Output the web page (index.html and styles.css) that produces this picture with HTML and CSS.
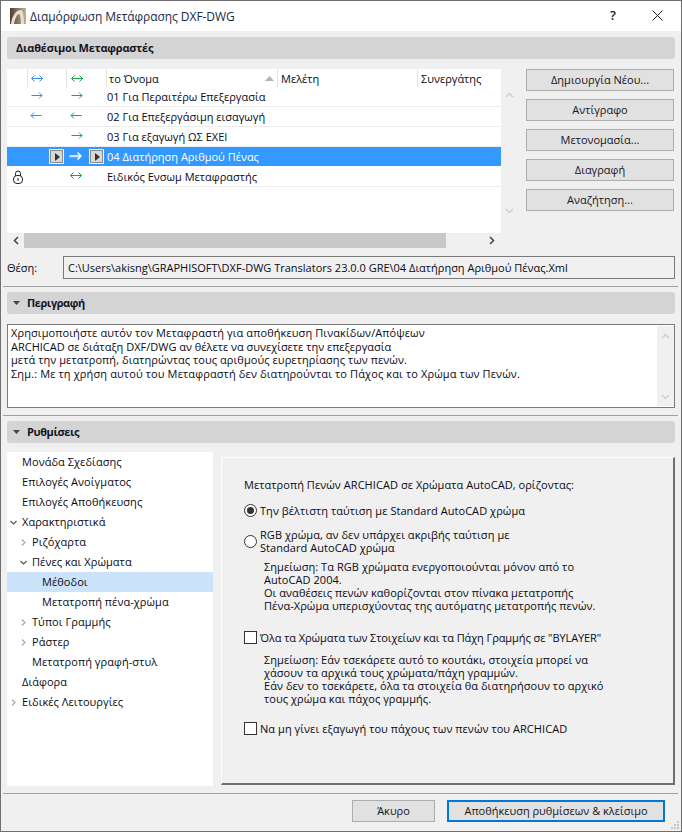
FILE: index.html
```html
<!DOCTYPE html>
<html lang="el">
<head>
<meta charset="utf-8">
<title>Διαμόρφωση Μετάφρασης DXF-DWG</title>
<link rel="stylesheet" href="styles.css">
</head>
<body>
<svg class="defs" width="0" height="0" aria-hidden="true">
  <symbol id="sel-arrow" viewBox="0 0 14 11"><path d="M.5 6.500h11M8 2.500l3.500 4L8 10" fill="none" stroke="#4fc88a"/><path d="M.5 5h11.500M8.500 1.500 12 5 8.500 8.500" fill="none" stroke="#fff" stroke-width="1.400"/></symbol>
  <symbol id="caret" viewBox="0 0 7 4"><path d="M0 0h7L3.500 4z" fill="#444"/></symbol>
  <symbol id="chev-d" viewBox="0 0 7 5"><path d="M.5 1 3.500 4 6.500 1" fill="none" stroke="#555" stroke-width="1.200"/></symbol>
  <symbol id="chev-r" viewBox="0 0 5 7"><path d="M1 .5 4 3.500 1 6.500" fill="none" stroke="#aaa" stroke-width="1.200"/></symbol>
</svg>
<div class="window">
  <header class="titlebar">
    <svg class="app-icon" viewBox="0 0 16 16"><defs><linearGradient id="ai" x1="0" x2="1"><stop offset="0" stop-color="#4a4034"/><stop offset="1" stop-color="#c0b298"/></linearGradient></defs><rect width="16" height="16" fill="url(#ai)"/><path d="M1 16C2 8 6 2 11 2c2 0 3 6 3 14h-3c0-5-1-10-2-10-2 0-4 5-5 10z" fill="#e8dfca"/></svg>
    <span class="title">Διαμόρφωση Μετάφρασης DXF-DWG</span>
    <span class="help">?</span>
    <svg class="close" viewBox="0 0 11 11"><path d="M.5.500l10 10M10.500.500l-10 10" stroke="#222" fill="none"/></svg>
  </header>
  <main class="content">
    <h2 class="section-head plain">Διαθέσιμοι Μεταφραστές</h2>
    <section class="translators">
      <div class="list-wrap">
        <div class="list">
          <div class="row head">
            <span></span>
            <span class="hc blue"><svg class="arr" viewBox="0 0 12 9"><path d="M.5 4.500h11M3.500 1.500l-3 3 3 3M8.500 1.500l3 3-3 3"/></svg></span>
            <span class="hc green"><svg class="arr" viewBox="0 0 12 9"><path d="M.5 4.500h11M3.500 1.500l-3 3 3 3M8.500 1.500l3 3-3 3"/></svg></span>
            <span class="hc name">το Όνομα<svg class="sort" viewBox="0 0 9 5"><path d="M0 5h9L4.500 0z" fill="#b4b4b4"/></svg></span>
            <span class="hc txt">Μελέτη</span>
            <span class="hc txt">Συνεργάτης</span>
          </div>
          <div class="row"><span></span><span class="c blue"><svg class="arr" viewBox="0 0 12 9"><path d="M.5 4.500h10.500M8 1.500l3 3-3 3"/></svg></span><span class="c green"><svg class="arr" viewBox="0 0 12 9"><path d="M.5 4.500h10.500M8 1.500l3 3-3 3"/></svg></span><span class="n">01 Για Περαιτέρω Επεξεργασία</span></div>
          <div class="row"><span></span><span class="c blue"><svg class="arr lft" viewBox="0 0 12 9"><path d="M1 4.500h10.500M4 1.500l-3 3 3 3"/></svg></span><span class="c green"><svg class="arr lft" viewBox="0 0 12 9"><path d="M1 4.500h10.500M4 1.500l-3 3 3 3"/></svg></span><span class="n">02 Για Επεξεργάσιμη εισαγωγή</span></div>
          <div class="row"><span></span><span class="c"></span><span class="c green"><svg class="arr" viewBox="0 0 12 9"><path d="M.5 4.500h10.500M8 1.500l3 3-3 3"/></svg></span><span class="n">03 Για εξαγωγή ΩΣ ΕΧΕΙ</span></div>
          <div class="row selected">
            <span></span>
            <span class="c end"><span class="play"></span></span>
            <span class="c sel-arrow end"><svg class="arr-sel"><use href="#sel-arrow"/></svg><span class="play"></span></span>
            <span class="n">04 Διατήρηση Αριθμού Πένας</span>
          </div>
          <div class="row">
            <span class="c lock"><svg viewBox="0 0 10 14" width="10" height="14"><path d="M2.500 6V3.500a2.500 2.500 0 0 1 5 0V6" fill="none" stroke="#222"/><rect x=".5" y="5.500" width="9" height="8" rx="3.500" fill="#fff" stroke="#222"/><path d="M5 8v3" stroke="#222"/></svg></span>
            <span class="c"></span><span class="c green"><svg class="arr lft" viewBox="0 0 12 9"><path d="M.5 4.500h11M3.500 1.500l-3 3 3 3M8.500 1.500l3 3-3 3"/></svg></span><span class="n">Ειδικός Ενσωμ Μεταφραστής</span>
          </div>
        </div>
        <div class="vscroll">
          <svg class="sv" viewBox="0 0 9 6"><path d="M1 5 4.500 1.500 8 5" fill="none" stroke="#cfcfcf" stroke-width="1.500"/></svg>
          <svg class="sv" viewBox="0 0 9 6"><path d="M1 1 4.500 4.500 8 1" fill="none" stroke="#cfcfcf" stroke-width="1.500"/></svg>
        </div>
        <div class="hscroll">
          <span class="harrow"><svg width="6" height="9" viewBox="0 0 6 9"><path d="M5 1 1.500 4.500 5 8" fill="none" stroke="#444" stroke-width="1.500"/></svg></span>
          <span class="thumb"></span>
          <span class="harrow last"><svg width="6" height="9" viewBox="0 0 6 9"><path d="M1 1 4.500 4.500 1 8" fill="none" stroke="#444" stroke-width="1.500"/></svg></span>
        </div>
      </div>
      <div class="side-buttons">
        <button class="btn">Δημιουργία Νέου...</button>
        <button class="btn">Αντίγραφο</button>
        <button class="btn">Μετονομασία...</button>
        <button class="btn">Διαγραφή</button>
        <button class="btn">Αναζήτηση...</button>
      </div>
    </section>
    <div class="path-row">
      <span class="path-label">Θέση:</span>
      <div class="path-field">C:\Users\akisng\GRAPHISOFT\DXF-DWG Translators 23.0.0 GRE\04 Διατήρηση Αριθμού Πένας.Xml</div>
    </div>
    <hr class="rule">
    <h2 class="section-head"><svg class="caret"><use href="#caret"/></svg>Περιγραφή</h2>
    <div class="desc">
      <p><span class="d1">Χρησιμοποιήστε αυτόν τον Μεταφραστή για αποθήκευση Πινακίδων/Απόψεων</span><br>ARCHICAD σε διάταξη DXF/DWG αν θέλετε να συνεχίσετε την επεξεργασία<br><span class="d3">μετά την μετατροπή, διατηρώντας τους αριθμούς ευρετηρίασης των πενών.</span><br><span class="d4">Σημ.: Με τη χρήση αυτού του Μεταφραστή δεν διατηρούνται το Πάχος και το Χρώμα των Πενών.</span></p>
      <div class="desc-scroll">
        <svg class="sv" viewBox="0 0 9 6"><path d="M1 5 4.500 1.500 8 5" fill="none" stroke="#cfcfcf" stroke-width="1.500"/></svg>
        <svg class="sv" viewBox="0 0 9 6"><path d="M1 1 4.500 4.500 8 1" fill="none" stroke="#cfcfcf" stroke-width="1.500"/></svg>
      </div>
    </div>
    <hr class="rule">
    <h2 class="section-head"><svg class="caret"><use href="#caret"/></svg>Ρυθμίσεις</h2>
    <section class="settings">
      <nav class="tree">
        <div class="node l0">Μονάδα Σχεδίασης</div>
        <div class="node l0">Επιλογές Ανοίγματος</div>
        <div class="node l0">Επιλογές Αποθήκευσης</div>
        <div class="node l0"><svg class="tw down"><use href="#chev-d"/></svg>Χαρακτηριστικά</div>
        <div class="node l1"><svg class="tw"><use href="#chev-r"/></svg>Ριζόχαρτα</div>
        <div class="node l1"><svg class="tw down"><use href="#chev-d"/></svg>Πένες και Χρώματα</div>
        <div class="node l2 current">Μέθοδοι</div>
        <div class="node l2">Μετατροπή πένα-χρώμα</div>
        <div class="node l1"><svg class="tw"><use href="#chev-r"/></svg>Τύποι Γραμμής</div>
        <div class="node l1"><svg class="tw"><use href="#chev-r"/></svg>Ράστερ</div>
        <div class="node l1">Μετατροπή γραφή-στυλ</div>
        <div class="node l0">Διάφορα</div>
        <div class="node l0"><svg class="tw"><use href="#chev-r"/></svg>Ειδικές Λειτουργίες</div>
      </nav>
      <div class="panel">
        <p class="lead">Μετατροπή Πενών ARCHICAD σε Χρώματα AutoCAD, ορίζοντας:</p>
        <div class="opt first"><span class="radio on"></span><span>Την βέλτιστη ταύτιση με Standard AutoCAD χρώμα</span></div>
        <div class="opt second"><span class="radio"></span><span>RGB χρώμα, αν δεν υπάρχει ακριβής ταύτιση με<br>Standard AutoCAD χρώμα</span></div>
        <p class="note n1">Σημείωση: Τα RGB χρώματα ενεργοποιούνται μόνον από το<br>AutoCAD 2004.<br>Οι αναθέσεις πενών καθορίζονται στον πίνακα μετατροπής<br>Πένα-Χρώμα υπερισχύοντας της αυτόματης μετατροπής πενών.</p>
        <div class="opt third"><span class="check"></span><span class="bylayer">Όλα τα Χρώματα των Στοιχείων και τα Πάχη Γραμμής σε "BYLAYER"</span></div>
        <p class="note n2">Σημείωση: Εάν τσεκάρετε αυτό το κουτάκι, στοιχεία μπορεί να<br>χάσουν τα αρχικά τους χρώματα/πάχη γραμμών.<br>Εάν δεν το τσεκάρετε, όλα τα στοιχεία θα διατηρήσουν το αρχικό<br>τους χρώμα και πάχος γραμμής.</p>
        <div class="opt fourth"><span class="check"></span><span>Να μη γίνει εξαγωγή του πάχους των πενών του ARCHICAD</span></div>
      </div>
    </section>
    <hr class="rule bottom">
    <footer class="actions">
      <button class="btn cancel">Άκυρο</button>
      <button class="btn primary">Αποθήκευση ρυθμίσεων &amp; κλείσιμο</button>
    </footer>
  </main>
  <svg class="grip" width="9" height="9" viewBox="0 0 9 9"><path d="M6 0h2v2H6zM3 3h2v2H3zM6 3h2v2H6zM0 6h2v2H0zM3 6h2v2H3zM6 6h2v2H6z" fill="#c4c4c4"/></svg>
</div>
</body>
</html>
```
FILE: styles.css
```css
* { box-sizing: border-box; }
html, body { margin: 0; padding: 0; }
body { width: 682px; height: 832px; overflow: hidden; font: 11px/13px "Open Sans", "Liberation Sans", sans-serif; color: #0a0a14; }
.defs { position: absolute; }
.window { position: relative; width: 682px; height: 832px; border: 1px solid #6f6f6f; background: #f0f0f0; display: flex; flex-direction: column; }
.titlebar { height: 30px; background: #fff; display: flex; align-items: center; padding-left: 9px; flex: none; }
.app-icon { width: 16px; height: 16px; margin-right: 4px; }
.title { font-size: 12px; letter-spacing: -.06px; color: #1a2a44; flex: 1; }
.help { font-size: 13px; font-weight: 600; color: #222; margin: 0 36px 2px 0; }
.close { width: 11px; height: 11px; margin: 0 18px 2px 0; }
.content { flex: 1; display: flex; flex-direction: column; padding: 6px 6px 0; }
.section-head { margin: 0; height: 22px; background: #d4d4d4; border-radius: 3px; font-size: 11px; font-weight: 700; letter-spacing: -.42px; line-height: 22px; display: flex; align-items: center; color: #14141f; padding-left: 6px; flex: none; }
.section-head.plain { padding-left: 9px; letter-spacing: -.2px; }
.caret { width: 7px; height: 4px; margin-right: 7px; }
.translators { display: flex; margin-top: 10px; height: 179px; flex: none; }
.list-wrap { width: 512px; display: grid; grid-template-columns: 494px 18px; grid-template-rows: 164px 15px; }
.list { background: #fff; }
.row { display: grid; grid-template-columns: 20px 39px 40px 171px 140px 84px; height: 20px; border-bottom: 1px solid #ececec; align-items: center; }
.row.head { height: 18px; border-bottom: 0; }
.hc { height: 18px; border-left: 1px solid #e4e4e4; display: flex; align-items: center; padding-left: 3px; }
.hc.name { justify-content: space-between; padding: 0 3px 0 2px; }
.hc.green { padding-left: 4px; }
.sort { width: 9px; height: 5px; }
.arr { width: 12px; height: 9px; display: block; fill: none; }
.blue .arr { stroke: #3a8eea; }
.green .arr { stroke: #17a552; }
.c .arr { margin-bottom: 2px; }
.c .arr.lft { margin-left: -1px; }
.arr-sel { width: 14px; height: 11px; display: block; margin-bottom: 1px; }
.c { display: flex; align-items: center; padding-left: 4px; }
.c.green { padding-left: 5px; }
.c.end { justify-content: flex-end; padding: 0 2px 0 3px; }
.sel-arrow { justify-content: space-between !important; }
.n { padding-left: 1px; white-space: nowrap; }
.selected { background: #3399ff; color: #fff; height: 19px; border-bottom: 0; margin-bottom: 1px; }
.play { width: 15px; height: 15px; background: #d8d8d8; border: 1px solid #f0f0f0; outline: 1px solid #8a8a8a; outline-offset: -2px; position: relative; display: block; flex: none; }
.play::after { content: ""; position: absolute; left: 5px; top: 3px; border-left: 5px solid #333; border-top: 4px solid transparent; border-bottom: 4px solid transparent; }
.lock { padding-left: 6px; }
.vscroll { display: flex; flex-direction: column; justify-content: space-between; padding: 23px 0 19px 4px; }
.sv { width: 9px; height: 6px; display: block; }
.hscroll { display: flex; background: #f0f0f0; align-items: center; grid-column: 1 / 2; padding-right: 1px; }
.harrow { width: 17px; height: 15px; display: flex; align-items: center; justify-content: center; flex: none; }
.harrow.last { margin-left: auto; }
.thumb { width: 422px; height: 15px; background: #c8c8c8; }
.side-buttons { display: flex; flex-direction: column; gap: 8px; margin-left: 7px; width: 148px; }
.btn { height: 22px; width: 148px; background: #e1e1e1; border: 1px solid #adadad; font: inherit; color: #14141f; padding: 0 0 2px; flex: none; }
.path-row { display: flex; align-items: center; margin-top: 8px; height: 23px; flex: none; }
.path-label { width: 56px; }
.path-field { width: 612px; height: 23px; border: 1px solid #7a7a7a; padding-left: 4px; line-height: 22px; white-space: nowrap; overflow: hidden; }
.rule { border: 0; height: 1px; background: #a0a0a0; margin: 7px -3px 5px -4px; flex: none; }
.desc { display: flex; justify-content: space-between; height: 84px; margin-top: 10px; background: #fff; border: 1px solid #7a7a7a; padding: 1px 0 1px 3px; flex: none; }
.desc p { margin: 0; line-height: 13.500px; white-space: nowrap; }
.d1 { letter-spacing: .1px; }
.d3 { letter-spacing: .07px; }
.d4 { letter-spacing: .125px; }
.desc-scroll { width: 17px; background: #f0f0f0; display: flex; flex-direction: column; justify-content: space-between; padding: 7px 4px 6px; }
.settings { display: flex; margin-top: 9px; height: 334px; flex: none; }
.tree { width: 206px; background: #fff; flex: none; letter-spacing: .06px; }
.node { height: 20px; line-height: 20px; position: relative; white-space: nowrap; }
.l0 { padding-left: 15px; }
.l1 { padding-left: 25px; }
.l2 { padding-left: 35px; }
.current { background: #cce4fb; }
.tw { position: absolute; width: 5px; height: 7px; top: 7px; margin-left: -11px; }
.tw.down { width: 7px; height: 5px; top: 8px; margin-left: -12px; }
.panel { width: 454px; height: 328px; margin: 5px 0 0 8px; border: 1px solid; border-color: #fff #6f6f6f #6f6f6f #fff; border-width: 1px 2px 2px 1px; padding: 20px 0 0 22px; flex: none; letter-spacing: .06px; }
.panel p { margin: 0; }
.opt { display: flex; align-items: center; }
.first { margin-top: 13px; }
.second { margin-top: 11px; }
.third { margin-top: 19px; }
.fourth { margin-top: 17px; }
.bylayer { letter-spacing: -.08px; }
.radio { width: 13px; height: 13px; border: 1px solid #333; border-radius: 50%; background: #fff; margin-right: 3px; flex: none; position: relative; }
.radio.on::after { content: ""; position: absolute; left: 2px; top: 2px; width: 7px; height: 7px; border-radius: 50%; background: #333; }
.check { width: 13px; height: 13px; border: 1px solid #333; background: #fff; margin-right: 3px; flex: none; }
.note { padding-left: 20px; }
.note.n1 { margin-top: 6px; }
.note.n2 { margin-top: 9px; }
.rule.bottom { margin-top: 7px; margin-bottom: 6px; }
.actions { display: flex; justify-content: flex-end; padding-right: 10px; gap: 12px; }
.cancel { width: 83px; }
.primary { width: 218px; border: 2px solid #0078d7; background: #e1e1e1; }
.grip { position: absolute; right: 1px; bottom: 1px; }
```
